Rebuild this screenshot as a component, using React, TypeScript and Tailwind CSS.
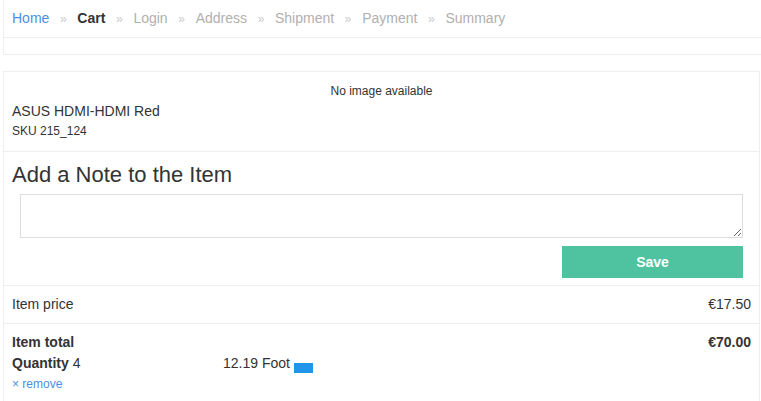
const steps = ["Cart", "Login", "Address", "Shipment", "Payment", "Summary"];

function Breadcrumb() {
  return (
    <div className="ml-[3px] w-[800px] border-l border-b border-[#eeeeee]">
      <div className="h-[38px] border-b border-[#eeeeee] flex items-center pl-[8px] text-[14px]">
        <a className="text-[#4a90e2]">Home</a>
        {steps.map((s) => (
          <span key={s} className="flex items-center">
            <span className="mx-[10px] inline-block w-[8px] text-center text-[12px] text-[#cccccc]">»</span>
            <span className={s === "Cart" ? "font-bold text-[#333333]" : "text-[#b0b0b0]"}>{s}</span>
          </span>
        ))}
      </div>
      <div className="h-[16px]" />
    </div>
  );
}

export default function App() {
  return (
    <div
      className="w-[761px] h-[401px] overflow-hidden bg-white text-[#333333]"
      style={{ fontFamily: '"Liberation Sans", Arial, sans-serif' }}
    >
      <Breadcrumb />

      <div className="mt-[16px] ml-[3px] w-[757px] border border-[#eeeeee]">
        {/* product */}
        <div className="border-b border-[#eeeeee] pt-[11px] pb-[12px] px-[8px]">
          <div className="text-center text-[12px] leading-[16px]">No image available</div>
          <div className="mt-[2px] text-[14px] leading-[20px]">ASUS HDMI-HDMI Red</div>
          <div className="mt-[2px] text-[12px] leading-[16px]">SKU 215_124</div>
        </div>

        {/* note */}
        <div className="border-b border-[#eeeeee] pt-[10px] pb-[7px]">
          <h2 className="pl-[8px] text-[22px] leading-[26px]">Add a Note to the Item</h2>
          <textarea className="block mt-[6px] ml-[16px] w-[723px] h-[44px] border border-[#dddddd] outline-none" />
          <div className="flex justify-end mt-[8px] pr-[16px]">
            <button className="w-[181px] h-[32px] bg-[#4fc3a0] text-white font-bold text-[14px]">Save</button>
          </div>
        </div>

        {/* item price */}
        <div className="border-b border-[#eeeeee] flex justify-between px-[8px] pt-[8px] pb-[9px] text-[14px] leading-[20px]">
          <span>Item price</span>
          <span>€17.50</span>
        </div>

        {/* total */}
        <div className="px-[8px] pt-[8px] pb-[24px] text-[14px]">
          <div className="flex justify-between font-bold leading-[21px]">
            <span>Item total</span>
            <span>€70.00</span>
          </div>
          <div className="flex items-start leading-[21px]">
            <div className="w-[211px]">
              <span className="font-bold">Quantity</span> 4
            </div>
            <span>12.19 Foot</span>
            <span className="ml-[4px] mt-[10px] w-[19px] h-[10px] bg-[#2196e8]" />
          </div>
          <a className="block mt-[2px] text-[12px] leading-[16px] text-[#4a90e2]">× remove</a>
        </div>
      </div>
    </div>
  );
}
